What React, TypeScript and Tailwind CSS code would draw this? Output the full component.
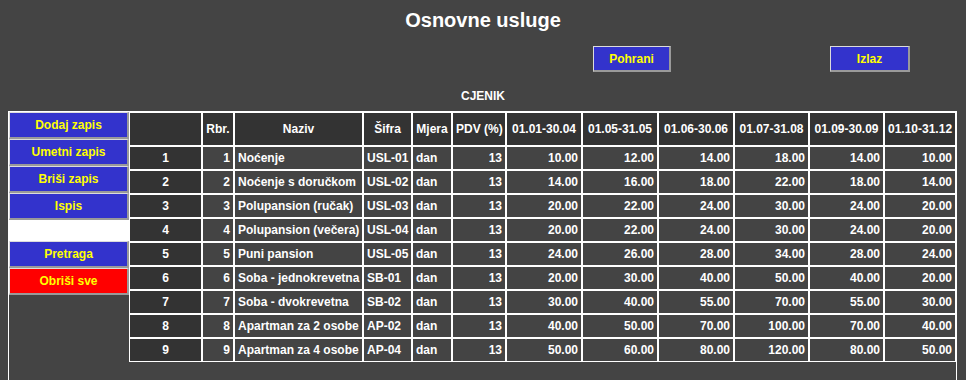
const columns = [
  { label: "", w: "w-[73px]" },
  { label: "Rbr.", w: "w-[32px]" },
  { label: "Naziv", w: "w-[129px]" },
  { label: "Šifra", w: "w-[49px]" },
  { label: "Mjera", w: "w-[40px]" },
  { label: "PDV (%)", w: "w-[54px]" },
  { label: "01.01-30.04", w: "w-[76px]" },
  { label: "01.05-31.05", w: "w-[76px]" },
  { label: "01.06-30.06", w: "w-[76px]" },
  { label: "01.07-31.08", w: "w-[75px]" },
  { label: "01.09-30.09", w: "w-[75px]" },
  { label: "01.10-31.12", w: "w-[72px]" },
];

const rows: [number, string, string, string, number, string[]][] = [
  [1, "Noćenje", "USL-01", "dan", 13, ["10.00", "12.00", "14.00", "18.00", "14.00", "10.00"]],
  [2, "Noćenje s doručkom", "USL-02", "dan", 13, ["14.00", "16.00", "18.00", "22.00", "18.00", "14.00"]],
  [3, "Polupansion (ručak)", "USL-03", "dan", 13, ["20.00", "22.00", "24.00", "30.00", "24.00", "20.00"]],
  [4, "Polupansion (večera)", "USL-04", "dan", 13, ["20.00", "22.00", "24.00", "30.00", "24.00", "20.00"]],
  [5, "Puni pansion", "USL-05", "dan", 13, ["24.00", "26.00", "28.00", "34.00", "28.00", "24.00"]],
  [6, "Soba - jednokrevetna", "SB-01", "dan", 13, ["20.00", "30.00", "40.00", "50.00", "40.00", "20.00"]],
  [7, "Soba - dvokrevetna", "SB-02", "dan", 13, ["30.00", "40.00", "55.00", "70.00", "55.00", "30.00"]],
  [8, "Apartman za 2 osobe", "AP-02", "dan", 13, ["40.00", "50.00", "70.00", "100.00", "70.00", "40.00"]],
  [9, "Apartman za 4 osobe", "AP-04", "dan", 13, ["50.00", "60.00", "80.00", "120.00", "80.00", "50.00"]],
];

function Btn({ label, className = "", red = false }: { label: string; className?: string; red?: boolean }) {
  return (
    <div
      className={`flex items-center justify-center border-t border-l border-t-[#dcdcdc] border-l-[#dcdcdc] border-b-2 border-r-2 border-b-[#9a9a9a] border-r-[#9a9a9a] text-[12px] font-bold text-[#ffff00] ${red ? "bg-[#ff0000]" : "bg-[#3333cc]"} ${className}`}
    >
      {label}
    </div>
  );
}

export default function App() {
  const td = "border border-white px-[3px] text-[12px] font-bold text-white whitespace-nowrap overflow-hidden";
  return (
    <div className="h-screen overflow-hidden bg-[#444444] font-['Liberation_Sans',Arial,sans-serif]">
      <div className="pt-[8px] text-center text-[20px] leading-[24px] font-bold text-white">Osnovne usluge</div>
      <div className="mt-[14px] flex h-[26px]">
        <Btn label="Pohrani" className="ml-[593px] w-[78px]" />
        <Btn label="Izlaz" className="ml-[159px] w-[80px]" />
      </div>
      <div className="mt-[17px] text-center text-[12px] leading-[14px] font-bold text-white">CJENIK</div>
      <div className="mt-[8px] ml-[8px] flex w-[949px] h-[269px] border-l border-t border-r border-white">
        <div className="flex w-[120px] flex-col">
          <Btn label="Dodaj zapis" className="h-[27px]" />
          <Btn label="Umetni zapis" className="h-[27px]" />
          <Btn label="Briši zapis" className="h-[27px]" />
          <Btn label="Ispis" className="h-[27px]" />
          <div className="h-[21px] bg-white"></div>
          <Btn label="Pretraga" className="h-[27px]" />
          <Btn label="Obriši sve" className="h-[27px]" red />
        </div>
        <div>
          <table className="w-[827px] table-fixed border-separate border-spacing-0">
            <thead>
              <tr>
                {columns.map((c, i) => (
                  <th key={i} className={`${td} ${c.w} h-[34px] bg-[#333333] text-center font-bold`}>
                    {c.label}
                  </th>
                ))}
              </tr>
            </thead>
            <tbody>
              {rows.map(([n, name, code, unit, pdv, prices]) => (
                <tr key={n}>
                  <td className={`${td} h-[24px] bg-[#333333] text-center`}>{n}</td>
                  <td className={`${td} h-[24px] text-right`}>{n}</td>
                  <td className={`${td} h-[24px] text-left`}>{name}</td>
                  <td className={`${td} h-[24px] text-left`}>{code}</td>
                  <td className={`${td} h-[24px] text-left`}>{unit}</td>
                  <td className={`${td} h-[24px] text-right`}>{pdv}</td>
                  {prices.map((p, i) => (
                    <td key={i} className={`${td} h-[24px] text-right`}>
                      {p}
                    </td>
                  ))}
                </tr>
              ))}
            </tbody>
          </table>
        </div>
      </div>
    </div>
  );
}
